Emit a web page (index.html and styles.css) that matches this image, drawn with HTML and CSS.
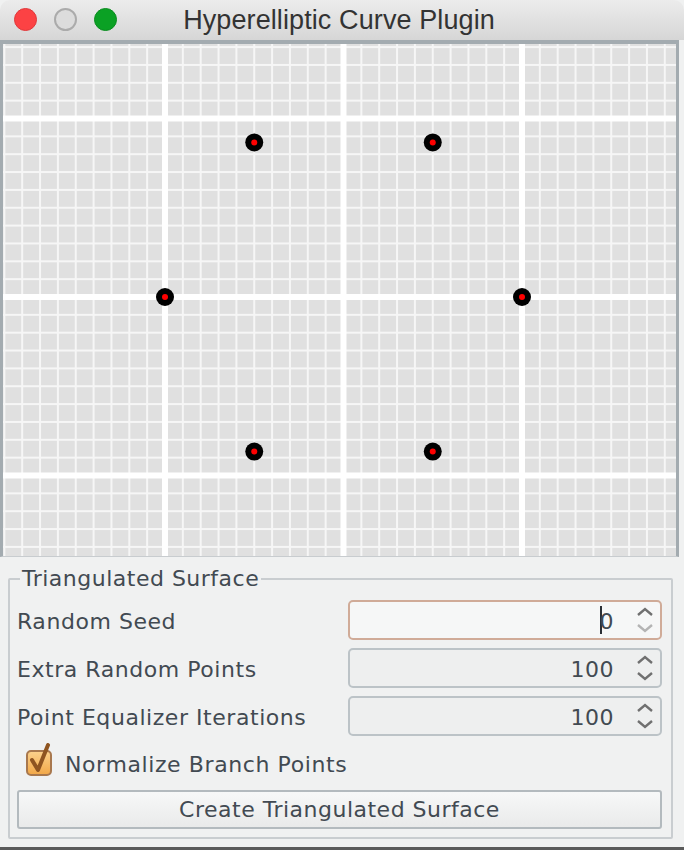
FILE: index.html
```html
<!DOCTYPE html>
<html>
<head>
<meta charset="utf-8">
<link rel="stylesheet" href="styles.css">
</head>
<body>
<div class="window">
  <div class="titlebar">
    <div class="lights">
      <span class="light red"></span>
      <span class="light gray"></span>
      <span class="light green"></span>
    </div>
    <div class="title">Hyperelliptic Curve Plugin</div>
  </div>
  <div class="canvas-frame">
    <svg class="plane" width="673" height="512" viewBox="0 0 673 512">
      <defs>
        <pattern id="minor" patternUnits="userSpaceOnUse" x="0.35" y="2.1" width="17.85" height="17.85">
          <rect x="0" y="0" width="2" height="17.85" fill="#f6f6f6"/>
          <rect x="0" y="0" width="17.85" height="2" fill="#f6f6f6"/>
        </pattern>
        <pattern id="major" patternUnits="userSpaceOnUse" x="159" y="71.5" width="178.5" height="178.5">
          <rect x="0" y="0" width="6" height="178.5" fill="#ffffff"/>
          <rect x="0" y="0" width="178.5" height="6" fill="#ffffff"/>
        </pattern>
      </defs>
      <rect x="0" y="0" width="673" height="512" fill="#e0e0e0"/>
      <rect x="0" y="0" width="673" height="512" fill="url(#minor)"/>
      <rect x="0" y="0" width="673" height="512" fill="url(#major)"/>
      <g>
        <circle cx="162" cy="253" r="9" fill="#000"/><circle cx="162" cy="253" r="3" fill="#ff0000"/>
        <circle cx="519" cy="253" r="9" fill="#000"/><circle cx="519" cy="253" r="3" fill="#ff0000"/>
        <circle cx="251.25" cy="98.4" r="9" fill="#000"/><circle cx="251.25" cy="98.4" r="3" fill="#ff0000"/>
        <circle cx="429.75" cy="98.4" r="9" fill="#000"/><circle cx="429.75" cy="98.4" r="3" fill="#ff0000"/>
        <circle cx="251.25" cy="407.6" r="9" fill="#000"/><circle cx="251.25" cy="407.6" r="3" fill="#ff0000"/>
        <circle cx="429.75" cy="407.6" r="9" fill="#000"/><circle cx="429.75" cy="407.6" r="3" fill="#ff0000"/>
      </g>
    </svg>
  </div>
  <div class="panel">
    <fieldset class="group">
      <legend class="legend">Triangulated Surface</legend>
      <div class="rows">
        <label class="lbl">Random Seed</label>
        <div class="spinner focused">
          <span class="value"><span class="caret"></span>0</span>
          <svg class="arrows" width="18" height="28" viewBox="0 0 18 28">
            <path d="M2 9 L9 3 L16 9" fill="none" stroke="#707070" stroke-width="2.4"/>
            <path d="M2 19 L9 25 L16 19" fill="none" stroke="#b4b4b4" stroke-width="2.4"/>
          </svg>
        </div>
        <label class="lbl">Extra Random Points</label>
        <div class="spinner">
          <span class="value">100</span>
          <svg class="arrows" width="18" height="28" viewBox="0 0 18 28">
            <path d="M2 9 L9 3 L16 9" fill="none" stroke="#707070" stroke-width="2.4"/>
            <path d="M2 19 L9 25 L16 19" fill="none" stroke="#707070" stroke-width="2.4"/>
          </svg>
        </div>
        <label class="lbl">Point Equalizer Iterations</label>
        <div class="spinner">
          <span class="value">100</span>
          <svg class="arrows" width="18" height="28" viewBox="0 0 18 28">
            <path d="M2 9 L9 3 L16 9" fill="none" stroke="#707070" stroke-width="2.4"/>
            <path d="M2 19 L9 25 L16 19" fill="none" stroke="#707070" stroke-width="2.4"/>
          </svg>
        </div>
      </div>
      <div class="check-row">
        <span class="checkbox">
          <svg class="tick" width="28" height="34" viewBox="0 0 28 34">
            <path d="M6 17 L12 27 L22 2" fill="none" stroke="#8e5420" stroke-width="4" stroke-linejoin="round" stroke-linecap="round"/>
          </svg>
        </span>
        <span class="check-label">Normalize Branch Points</span>
      </div>
      <button class="button">Create Triangulated Surface</button>
    </fieldset>
  </div>
</div>
</body>
</html>
```

FILE: styles.css
```css
html, body {
  margin: 0;
  padding: 0;
}
body {
  width: 684px;
  height: 850px;
  overflow: hidden;
  background: #ffffff;
  font-family: "DejaVu Sans", "Noto Sans", sans-serif;
}
.window {
  width: 684px;
  height: 850px;
  display: flex;
  flex-direction: column;
  background: #f0f1f1;
  box-sizing: border-box;
  border-bottom: 3px solid #5a5a5a;
}
.titlebar {
  height: 40px;
  flex: none;
  display: flex;
  align-items: center;
  justify-content: center;
  position: relative;
  background: linear-gradient(#ececec, #d6d6d6);
  border-top-left-radius: 10px;
  border-top-right-radius: 10px;
}
.lights {
  position: absolute;
  left: 14px;
  top: 8px;
  display: flex;
  gap: 17px;
}
.light {
  width: 23px;
  height: 23px;
  border-radius: 50%;
  box-sizing: border-box;
}
.light.red {
  background: #fc4244;
  border: 1px solid #e0383a;
}
.light.gray {
  background: #dcdcdc;
  border: 2px solid #ababab;
}
.light.green {
  background: #0ba124;
  border: 1px solid #0a8c1f;
}
.title {
  font-family: "Liberation Sans", Arial, sans-serif;
  font-size: 27px;
  color: #333333;
  letter-spacing: 0.1px;
  margin-left: -6px;
}
.canvas-frame {
  flex: none;
  height: 512px;
  width: 673px;
  border-top: 4px solid #a3abb0;
  border-left: 3px solid #a3abb0;
  border-right: 3px solid #a3abb0;
  border-bottom: 1px solid #c8cccf;
  background: #e0e0e0;
}
.plane {
  display: block;
}
.panel {
  flex: 1;
  padding: 9px 11px 0 8px;
  background: #f0f1f1;
}
.group {
  margin: 0;
  padding: 8px 9px 8px 7px;
  border: 2px solid #c9cdd0;
  border-radius: 2px;
  min-width: 0;
}
.legend {
  font-size: 22px;
  line-height: 26px;
  color: #424a52;
  padding: 0 2px;
  margin-left: 3px;
  letter-spacing: 0.5px;
}
.rows {
  display: grid;
  grid-template-columns: 1fr 314px;
  grid-auto-rows: 40px;
  row-gap: 8px;
  align-items: center;
}
.lbl {
  font-size: 22px;
  color: #424a52;
  line-height: 40px;
  padding-top: 4px;
  letter-spacing: 0.55px;
}
.spinner {
  height: 40px;
  box-sizing: border-box;
  border: 2px solid #bcc3c7;
  border-radius: 5px;
  background: #eeefef;
  display: flex;
  align-items: center;
  justify-content: flex-end;
  padding-right: 6px;
}
.spinner.focused {
  border-color: #d0ab98;
  background: #f6f7f7;
}
.value {
  font-size: 22px;
  color: #424a52;
  margin-right: 22px;
  display: flex;
  align-items: center;
  padding-top: 3px;
  letter-spacing: 0.5px;
}
.caret {
  display: inline-block;
  width: 2px;
  height: 28px;
  background: #2a2f35;
  margin-right: -2px;
  margin-top: -3px;
}
.arrows {
  display: block;
}
.check-row {
  display: flex;
  align-items: center;
  margin-top: 14px;
  height: 26px;
  padding-left: 9px;
}
.checkbox {
  width: 26px;
  height: 26px;
  box-sizing: border-box;
  border: 2px solid #a8784e;
  border-radius: 5px;
  background: linear-gradient(#fbd08a, #f2a94a);
  position: relative;
  flex: none;
}
.tick {
  position: absolute;
  left: -2px;
  top: -9px;
}
.check-label {
  font-size: 22px;
  color: #424a52;
  margin-left: 13px;
  padding-top: 3px;
  letter-spacing: 0.6px;
}
.button {
  display: block;
  width: 100%;
  height: 39px;
  margin-top: 14px;
  box-sizing: border-box;
  border: 2px solid #b3babe;
  border-radius: 3px;
  background: linear-gradient(#f7f8f8, #e9eaea);
  font-family: "DejaVu Sans", "Noto Sans", sans-serif;
  font-size: 22px;
  color: #424a52;
  padding: 0;
  letter-spacing: 0.5px;
}
```
